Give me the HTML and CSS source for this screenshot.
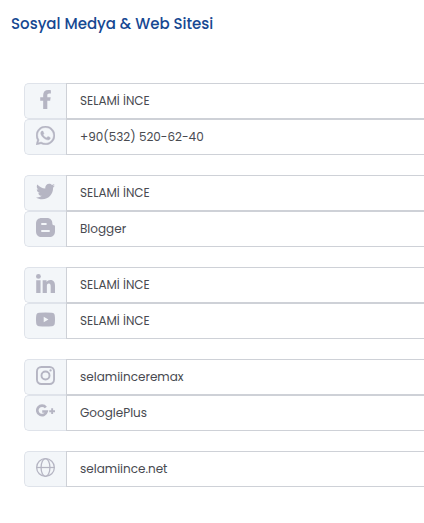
FILE: index.html
```html
<!DOCTYPE html>
<html lang="tr">
<head>
<meta charset="utf-8">
<meta name="viewport" content="width=device-width, initial-scale=1">
<title>Sosyal Medya &amp; Web Sitesi</title>
<link rel="stylesheet" href="styles.css">
</head>
<body>
<main class="panel">
  <h1 class="title">Sosyal Medya &amp; Web Sitesi</h1>
  <form class="groups">
    <div class="group">
      <div class="field">
        <label class="badge" for="facebook" aria-label="Facebook"><svg class="icon" viewBox="0 0 18 18"><path d="M6.800 18V10.300H4V6.900h2.800V5C6.800 1.700 8.600 0 11.600 0 12.800 0 14.100.2 14.100.2V3.200h-1.500C11.200 3.200 10.700 4 10.700 4.900v2h3.200l-.5 3.400h-2.700V18z"/></svg></label>
        <input class="value" id="facebook" type="text" value="SELAMİ İNCE">
      </div>
      <div class="field">
        <label class="badge" for="whatsapp" aria-label="WhatsApp"><svg class="icon" viewBox="0 0 448 448"><path d="M380.900 65.100C339 23.100 283.200 0 223.900 0 101.500 0 1.900 99.600 1.900 222c0 39.100 10.200 77.300 29.600 111L0 448l117.700-30.900c32.400 17.700 68.900 27 106.100 27h.1c122.300 0 224.100-99.600 224.100-222 0-59.300-25.200-115-67.100-157zM223.900 406.700c-33.200 0-65.700-8.900-94-25.700l-6.700-4-69.800 18.300L72 327.200l-4.400-7c-18.500-29.400-28.200-63.300-28.200-98.200 0-101.700 82.800-184.500 184.600-184.500 49.300 0 95.600 19.200 130.400 54.100 34.800 34.900 56.200 81.200 56.100 130.500 0 101.800-84.900 184.600-186.600 184.600zm101.200-138.200c-5.500-2.800-32.800-16.200-37.900-18-5.100-1.900-8.800-2.800-12.500 2.800-3.700 5.600-14.300 18-17.600 21.800-3.200 3.700-6.500 4.200-12 1.400-32.600-16.300-54-29.100-75.500-66-5.700-9.800 5.700-9.100 16.300-30.300 1.800-3.700.9-6.900-.5-9.700-1.400-2.800-12.500-30.100-17.100-41.200-4.500-10.800-9.100-9.300-12.500-9.500-3.200-.2-6.900-.2-10.600-.2s-9.700 1.400-14.800 6.900c-5.100 5.600-19.400 19-19.400 46.300s19.900 53.700 22.600 57.400c2.800 3.700 39.100 59.700 94.800 83.800 35.200 15.200 49 16.500 66.600 13.900 10.700-1.600 32.800-13.400 37.400-26.400 4.600-13 4.600-24.100 3.200-26.400-1.300-2.500-5-3.900-10.500-6.600z" stroke="#b5b5c3" stroke-width="10"/></svg></label>
        <input class="value" id="whatsapp" type="tel" value="+90(532) 520-62-40">
      </div>
    </div>
    <div class="group">
      <div class="field">
        <label class="badge" for="twitter" aria-label="Twitter"><svg class="icon" viewBox="0 0 512 512"><path d="M459.400 151.700c.3 4.500.3 9.100.3 13.600 0 138.700-105.600 298.600-298.600 298.600-59.500 0-114.700-17.200-161.100-47.100 8.400 1 16.600 1.300 25.300 1.300 49.100 0 94.200-16.600 130.300-44.800-46.100-1-84.800-31.200-98.100-72.800 6.500 1 13 1.600 19.800 1.600 9.400 0 18.800-1.300 27.600-3.600-48.100-9.700-84.100-52-84.100-103v-1.300c14 7.800 30.200 12.700 47.400 13.300-28.300-18.800-46.800-51-46.800-87.400 0-19.500 5.200-37.400 14.300-53 51.700 63.700 129.300 105.300 216.400 109.800-1.600-7.800-2.600-15.900-2.600-24 0-57.800 46.800-104.900 104.900-104.900 30.200 0 57.500 12.700 76.700 33.100 23.700-4.500 46.500-13.300 66.600-25.300-7.800 24.400-24.400 44.800-46.100 57.800 21.100-2.300 41.600-8.100 60.400-16.200-14.300 20.800-32.200 39.300-52.600 54.300z"/></svg></label>
        <input class="value" id="twitter" type="text" value="SELAMİ İNCE">
      </div>
      <div class="field">
        <label class="badge" for="blogger" aria-label="Blogger"><svg class="icon" viewBox="0 0 18 18"><path fill-rule="evenodd" d="M5.500 0h5C13.500 0 15.500 2 15.500 5v.5c0 .9.5 1.300 1.300 1.300.8 0 1.200.4 1.200 1.200v4.500c0 3.500-2 5.500-5.500 5.500h-7C2 18 0 16 0 12.500v-7C0 2 2 0 5.500 0zm.2 4.700a.9.900 0 0 0 0 1.900h3.600a.9.900 0 0 0 0-1.900zm0 6.600a.9.900 0 0 0 0 1.900h6.600a.9.900 0 0 0 0-1.900z"/></svg></label>
        <input class="value" id="blogger" type="text" value="Blogger">
      </div>
    </div>
    <div class="group">
      <div class="field">
        <label class="badge" for="linkedin" aria-label="LinkedIn"><svg class="icon" viewBox="0 0 18 18"><circle cx="2.300" cy="2.300" r="2.300"/><path d="M.2 6h4.100v12H.2zM6.300 6H10v1.600C10.700 6.400 12 5.700 13.600 5.700 17 5.700 18 8 18 11.200V18h-4.100v-6c0-1.600-.2-2.900-1.700-2.900-1.600 0-1.900 1.200-1.900 2.800V18h-4z"/></svg></label>
        <input class="value" id="linkedin" type="text" value="SELAMİ İNCE">
      </div>
      <div class="field">
        <label class="badge" for="youtube" aria-label="YouTube"><svg class="icon" viewBox="0 0 18 18"><path fill-rule="evenodd" d="M3 2.700Q9 2.100 15 2.700 17.600 2.900 17.800 5.500 18.200 9 17.800 12.500 17.600 15.100 15 15.300 9 15.900 3 15.300.4 15.100.2 12.500-.2 9 .2 5.500.4 2.900 3 2.700zM7.300 6.400v5.200L11.800 9z"/></svg></label>
        <input class="value" id="youtube" type="text" value="SELAMİ İNCE">
      </div>
    </div>
    <div class="group">
      <div class="field">
        <label class="badge" for="instagram" aria-label="Instagram"><svg class="icon line" viewBox="0 0 18 18"><rect x=".9" y=".9" width="16.200" height="16.200" rx="4.200" stroke-width="1.800"/><circle cx="9" cy="9" r="3.800" stroke-width="1.800"/><circle class="dot" cx="13.800" cy="4.200" r="1.100"/></svg></label>
        <input class="value" id="instagram" type="text" value="selamiinceremax">
      </div>
      <div class="field">
        <label class="badge" for="googleplus" aria-label="Google Plus"><svg class="icon line" viewBox="0 0 18 18"><path stroke-width="2.500" d="M9.300 5.200A4.500 4.500 0 1 0 10.100 9H5.900"/><path stroke-width="1.800" d="M15.300 6v5.400M12.600 8.700H18"/></svg></label>
        <input class="value" id="googleplus" type="text" value="GooglePlus">
      </div>
    </div>
    <div class="group">
      <div class="field">
        <label class="badge" for="website" aria-label="Web Sitesi"><svg class="icon line" viewBox="0 0 18 18"><circle cx="9" cy="9" r="8.400" stroke-width="1.200"/><ellipse cx="9" cy="9" rx="4.200" ry="8.400" stroke-width="1.200"/><path stroke-width="1.200" d="M.6 9h16.800"/></svg></label>
        <input class="value" id="website" type="text" value="selamiince.net">
      </div>
    </div>
  </form>
</main>
</body>
</html>
```
FILE: styles.css
```css
* {
  box-sizing: border-box;
}

body {
  margin: 0;
  background: #fff;
  font-family: Poppins, Inter, "Open Sans", sans-serif;
}

.panel {
  padding-top: 12px;
}

.title {
  margin: 0 0 47px;
  padding-left: 11px;
  color: #164892;
  font-size: 15px;
  font-weight: 500;
  line-height: 24px;
}

.groups {
  display: flex;
  flex-direction: column;
  gap: 20px;
  padding-left: 24px;
}

.field {
  display: flex;
  height: 36px;
}

.badge {
  display: flex;
  flex: none;
  justify-content: center;
  width: 42px;
  padding-top: 6px;
  border: 1px solid #dfe3ea;
  border-right: 0;
  border-radius: 5px 0 0 5px;
  background: #f3f6f9;
}

.icon {
  width: 19px;
  height: 19px;
  fill: #b5b5c3;
}

.line {
  fill: none;
  stroke: #b5b5c3;
}

.dot {
  fill: #b5b5c3;
  stroke: none;
}

.value {
  flex: 1;
  min-width: 0;
  padding: 0 13px;
  border: 1px solid #ced1d7;
  border-right: 0;
  border-radius: 0;
  outline: 0;
  background: #fff;
  color: #484a50;
  font-family: inherit;
  font-size: 12px;
  font-weight: 400;
}
```
